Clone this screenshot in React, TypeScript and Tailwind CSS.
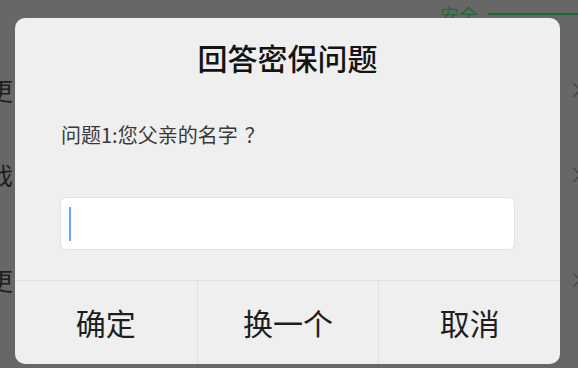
import { ChevronRight } from 'lucide-react';

const rows = [
  { label: '变更', h: 'h-[84px]' },
  { label: '游戏', h: 'h-[86px]' },
  { label: '变更', h: 'h-[124px]' },
];

export default function App() {
  return (
    <div
      className="relative w-[578px] h-[368px] overflow-hidden bg-[#676767]"
      style={{ fontFamily: '"Noto Sans CJK SC", "Noto Sans", sans-serif' }}
    >
      {/* page behind the dim overlay */}
      <div className="flex flex-col">
        <div className="h-[28px] flex items-center justify-end gap-[10px] pl-4">
          <span className="text-[19px] leading-none text-[#1f6b32]">安全</span>
          <div className="w-[90px] h-[2px] bg-[#1a6a2c]" />
        </div>
        <div className="h-[20px]" />
        {rows.map((r, i) => (
          <div key={i} className={`${r.h} flex items-center justify-between`}>
            <span className="-ml-[35px] text-[24px] text-[#1e1e1e]">{r.label}</span>
            <ChevronRight size={26} strokeWidth={1.5} className="-mr-[12px] text-[#4a4a4a]" />
          </div>
        ))}
      </div>

      {/* dialog */}
      <div className="absolute left-[15px] top-[18px] w-[545px] h-[346px] rounded-[10px] bg-[#efefef] flex flex-col">
        <h2 className="pt-[20px] h-[74px] text-center text-[30px] leading-[38px] font-medium text-[#141414]">
          回答密保问题
        </h2>
        <p className="mt-[29px] px-[46px] text-[20px] leading-[28px] text-[#3a3a3a]">
          问题1:您父亲的名字<span className="ml-[7px]">？</span>
        </p>
        <div className="mt-[48px] mx-[45px] h-[53px] rounded-[6px] bg-white border border-[#e2e2e2] flex items-center pl-[8px]">
          <div className="w-[2px] h-[34px] bg-[#6aa8f0]" />
        </div>
        <div className="mt-auto h-[84px] border-t border-[#e0e0e0] grid grid-cols-3">
          <button className="text-[30px] text-[#1e1e1e]">确定</button>
          <button className="text-[30px] text-[#1e1e1e] border-l border-[#e0e0e0]">换一个</button>
          <button className="text-[30px] text-[#1e1e1e] border-l border-[#e0e0e0]">取消</button>
        </div>
      </div>
    </div>
  );
}
